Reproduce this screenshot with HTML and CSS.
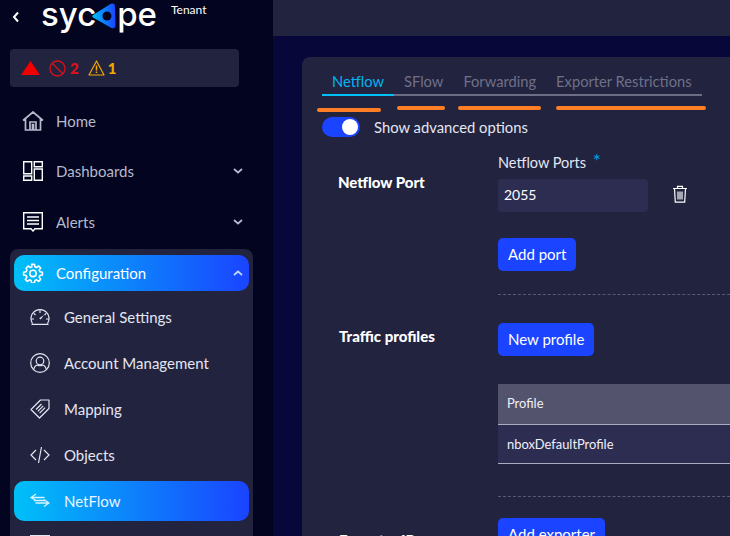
FILE: index.html
```html
<!DOCTYPE html>
<html lang="en">
<head>
<meta charset="utf-8">
<title>Sycope NetFlow configuration</title>
<link rel="stylesheet" href="styles.css">
</head>
<body>
<div class="app">
  <aside class="sidebar">
    <header class="brand">
      <svg class="back" width="8" height="12" viewBox="0 0 8 12"><path d="M6 1.500 2 6l4 4.500" fill="none" stroke="#fff" stroke-width="2"/></svg>
      <div class="logo">
        <span>syc</span>
        <svg class="logo-o" width="24" height="26" viewBox="0 0 24 26">
          <defs><linearGradient id="lg" x1="0" y1="0" x2="1" y2="0"><stop offset="0" stop-color="#00c0f8"/><stop offset="1" stop-color="#1a44ff"/></linearGradient></defs>
          <path d="M1 12 18.500 1q4-1.500 4.500 2l.5 20q-.5 3-4 2L1 14.500q-1.500-1.200 0-2.500Z" fill="url(#lg)"/>
          <circle cx="15" cy="13" r="4.500" fill="#03041f"/>
        </svg>
        <span>pe</span>
      </div>
      <span class="tenant">Tenant</span>
    </header>
    <div class="alerts-box">
      <svg width="19" height="14" viewBox="0 0 19 14"><path d="M9.500 0 19 14H0Z" fill="#f00000"/></svg>
      <svg class="ban" width="17" height="17" viewBox="0 0 17 17"><circle cx="8.500" cy="8.500" r="7.500" fill="none" stroke="#d8101c" stroke-width="1.300"/><path d="M3.200 3.200 13.800 13.800" stroke="#d8101c" stroke-width="1.300"/></svg>
      <b class="count red">2</b>
      <svg class="warn" width="17" height="16" viewBox="0 0 17 16"><path d="M8.500 1 16 15H1Z" fill="none" stroke="#f2a900" stroke-width="1.200" stroke-linejoin="round"/><path d="M8.500 5.500v5M8.500 11.500v1.500" stroke="#f2a900" stroke-width="1.500"/></svg>
      <b class="count amber">1</b>
    </div>
    <nav class="nav">
      <a class="item">
        <svg class="ico" width="22" height="20" viewBox="0 0 22 20"><path d="M1 9.500 11 1l10 8.500M3.500 8v11h15V8M8 19v-8h6v8M10.500 19v-5.500h1V19" fill="none" stroke="#b7b9cc" stroke-width="1.700"/></svg>
        <span>Home</span>
      </a>
      <a class="item">
        <svg class="ico" width="20" height="20" viewBox="0 0 20 20"><path d="M.7.700h8v12h-8zM11.300.700h8v5h-8zM11.300 8h8v11.300h-8zM.7 15h8v4.300h-8z" fill="none" stroke="#fff" stroke-width="1.400"/></svg>
        <span>Dashboards</span>
        <svg class="chev" width="10" height="6" viewBox="0 0 10 6"><path d="m1 1 4 3.500L9 1" fill="none" stroke="#b7b9cc" stroke-width="1.700"/></svg>
      </a>
      <a class="item item-alerts">
        <svg class="ico" width="20" height="20" viewBox="0 0 20 20"><path d="M.7.700h18.600v16h-7.300L10 19l-2-2.300H.7zM4 5h12M4 8.500h12M4 12h12" fill="none" stroke="#fff" stroke-width="1.400"/></svg>
        <span>Alerts</span>
        <svg class="chev" width="10" height="6" viewBox="0 0 10 6"><path d="m1 1 4 3.500L9 1" fill="none" stroke="#b7b9cc" stroke-width="1.700"/></svg>
      </a>
      <div class="group">
        <a class="group-head">
          <svg class="ico" width="20" height="20" viewBox="0 0 24 24"><path d="M10.300 1.500h3.400l.6 3.100 1.900.8 2.600-1.800 2.400 2.400-1.800 2.600.8 1.900 3.100.6v3.400l-3.100.6-.8 1.900 1.800 2.600-2.400 2.400-2.600-1.800-1.900.8-.6 3.100h-3.400l-.6-3.100-1.900-.8-2.600 1.800-2.400-2.400 1.800-2.600-.8-1.900-3.100-.6v-3.400l3.100-.6.8-1.900L3.800 6l2.400-2.400 2.600 1.800 1.900-.8Z" fill="none" stroke="#fff" stroke-width="1.900" stroke-linejoin="round"/><circle cx="12" cy="12.500" r="3.800" fill="none" stroke="#fff" stroke-width="1.900"/></svg>
          <span>Configuration</span>
          <svg class="chev" width="10" height="6" viewBox="0 0 10 6"><path d="m1 5 4-3.500L9 5" fill="none" stroke="#c6d4ff" stroke-width="1.700"/></svg>
        </a>
        <a class="sub">
          <svg class="sub-ico" width="20" height="16" viewBox="0 0 20 16"><path d="M2.500 14.500A9 9 0 1 1 17.500 14.500M1.500 15.300h17M10 1.500v2.500M4 4.500 5.500 6M16 4.500 14.500 6M1.500 10H4M18.500 10H16" fill="none" stroke="#e4e6f2" stroke-width="1.200"/><path d="m14 6-3.300 4.500-1.500-1.200Z" fill="#e4e6f2"/></svg>
          <span>General Settings</span>
        </a>
        <a class="sub">
          <svg class="sub-ico" width="20" height="20" viewBox="0 0 20 20"><circle cx="10" cy="10" r="9.300" fill="none" stroke="#e4e6f2" stroke-width="1.200"/><circle cx="10" cy="8" r="3.800" fill="none" stroke="#e4e6f2" stroke-width="1.200"/><path d="M3.800 16.500q.7-4 3.700-4.500 2.500 1.500 5 0 3 .5 3.700 4.500" fill="none" stroke="#e4e6f2" stroke-width="1.200"/></svg>
          <span>Account Management</span>
        </a>
        <a class="sub">
          <svg class="sub-ico" width="20" height="20" viewBox="0 0 20 20"><path d="M1 10.500 10.500 1H19v8.500L9.500 19ZM6 10.500l5.500-5.500M7.800 12.300l5.500-5.500M9.600 14.100l5.500-5.500" fill="none" stroke="#e4e6f2" stroke-width="1.200" stroke-linejoin="round"/></svg>
          <span>Mapping</span>
        </a>
        <a class="sub">
          <svg class="sub-ico" width="20" height="18" viewBox="0 0 20 18"><path d="M6 4 1 9l5 5M14 4l5 5-5 5M11.500 1 8.500 17" fill="none" stroke="#e4e6f2" stroke-width="1.200"/></svg>
          <span>Objects</span>
        </a>
        <a class="sub sub-active">
          <svg class="sub-ico netflow-ico" width="20" height="14" viewBox="0 0 20 14"><path d="M6 1 1 4.500 6 7.500M1 4.500h13.500M14 6.500l5 3.500-5 3.500M19 10H5.500M4 7.500h11" fill="none" stroke="#d8f4ff" stroke-width="1.300"/></svg>
          <span>NetFlow</span>
        </a>
        <a class="sub sub-next"><span class="stub"></span></a>
      </div>
    </nav>
  </aside>
  <div class="content">
    <div class="topbar"></div>
    <main class="main">
      <section class="card">
        <div class="tabs">
          <a class="tab tab-active">Netflow</a>
          <a class="tab">SFlow</a>
          <a class="tab">Forwarding</a>
          <a class="tab">Exporter Restrictions</a>
        </div>
        <div class="toggle-row">
          <span class="toggle"><span class="knob"></span></span>
          <span>Show advanced options</span>
        </div>
        <div class="row row-port">
          <h3 class="row-label label-port">Netflow Port</h3>
          <div class="row-body">
            <label class="field-label">Netflow Ports <span class="req">*</span></label>
            <div class="port-line">
              <div class="input">2055</div>
              <svg class="trash" width="16" height="18" viewBox="0 0 16 18"><path d="M1 3.500h14M5.500 3.500V1.300h5v2.200M2.500 3.500l.8 13.700h9.400l.8-13.700M6 6.500v8M8 6.500v8M10 6.500v8" fill="none" stroke="#fff" stroke-width="1.200"/></svg>
            </div>
            <button class="btn btn-port">Add port</button>
          </div>
        </div>
        <div class="row row-profiles">
          <h3 class="row-label label-profiles">Traffic profiles</h3>
          <div class="row-body body-rule">
            <button class="btn">New profile</button>
            <div class="table">
              <div class="th">Profile</div>
              <div class="td">nboxDefaultProfile</div>
            </div>
          </div>
        </div>
        <div class="row row-exporter">
          <h3 class="row-label label-exporter">Exporter IP</h3>
          <div class="row-body body-rule body-exporter">
            <button class="btn">Add exporter</button>
          </div>
        </div>
      </section>
    </main>
  </div>
</div>
<div class="mark mark-1"></div>
<div class="mark mark-2"></div>
<div class="mark mark-3"></div>
<div class="mark mark-4"></div>
</body>
</html>
```

FILE: styles.css
```css
* { box-sizing: border-box; }
html, body { margin: 0; height: 100%; overflow: hidden; }
body { font-family: Lato, "Open Sans", sans-serif; font-size: 15px; color: #e4e6f2; background: #03041f; position: relative; }
.app { display: flex; height: 536px; overflow: hidden; }
.sidebar { width: 273px; flex: none; background: #03041f; padding-right: 20px; }
.brand { display: flex; height: 36px; padding-left: 12px; align-items: flex-start; }
.back { flex: none; margin-top: 11px; }
.logo { display: flex; align-items: flex-start; margin-left: 21px; font-family: Inter, sans-serif; font-size: 33px; line-height: 28px; font-weight: 500; color: #fff; }
.logo-o { margin: 3px 1px 0 -4px; flex: none; }
.tenant { font-size: 12px; line-height: 14px; color: #fff; margin: 3px 0 0 14px; }
.alerts-box { margin: 13px 0 0 10px; height: 38px; background: #22233f; border-radius: 4px; display: flex; align-items: center; padding-left: 11px; width: 229px; }
.ban { margin-left: 9px; }
.count { font-size: 15px; margin-left: 4px; font-weight: 900; }
.red { color: #e01018; }
.warn { margin-left: 9px; }
.amber { color: #f2a900; margin-left: 3px; }
.nav { display: flex; flex-direction: column; margin-top: 9px; }
.item { display: flex; align-items: center; height: 50px; padding-left: 22px; color: #b7b9cc; position: relative; }
.item-alerts { margin-top: 1px; }
.ico { flex: none; width: 22px; margin-right: 12px; }
.chev { position: absolute; left: 233px; top: 22px; }
.group { margin: 2px 0 0 10px; background: #22233f; border-radius: 8px 8px 0 0; padding: 6px 4px 0; height: 300px; }
.group-head { display: flex; align-items: center; position: relative; height: 36px; margin-bottom: 3px; padding-left: 8px; border-radius: 10px; background: linear-gradient(90deg, #00c0f8, #1a44ff); color: #fff; }
.group-head .chev { left: 219px; top: 15px; }
.sub { display: flex; align-items: center; height: 46px; padding-left: 16px; color: #e4e6f2; }
.sub-ico { width: 20px; flex: none; margin-right: 14px; }
.netflow-ico { margin-top: -3px; }
.sub-active { height: 40px; margin-top: 3px; border-radius: 10px; background: linear-gradient(90deg, #00c0f8, #1a44ff); color: #e8f6ff; }
.sub-next { height: 30px; align-items: flex-start; padding-top: 14px; }
.stub { display: block; width: 20px; height: 20px; background: #e4e6f2; }
.content { flex: 1; min-width: 0; display: flex; flex-direction: column; }
.topbar { height: 36px; flex: none; background: #22233f; }
.main { flex: 1; background: #07073a; padding: 21px 0 0 29px; overflow: hidden; }
.card { background: #22233f; border-radius: 8px 8px 0 0; margin-right: -30px; padding: 0 0 0 20px; height: 520px; }
.tabs { display: flex; width: 380px; height: 39px; padding-top: 15px; border-bottom: 2px solid #6c6c84; font-size: 14.7px; }
.tab { padding: 0 10px; height: 24px; line-height: 19px; color: #6f7088; border-bottom: 2px solid transparent; }
.tab-active { color: #00b4f0; border-bottom-color: #00c0f8; width: 72px; }
.toggle-row { display: flex; align-items: center; gap: 14px; margin-top: 21px; height: 20px; color: #e4e6f2; font-size: 14.8px; }
.toggle-row span:last-child { margin-top: -1px; }
.toggle { width: 38px; height: 20px; background: #1a44ff; border-radius: 10px; display: flex; align-items: center; justify-content: flex-end; padding-right: 2px; }
.knob { width: 16px; height: 16px; background: #fff; border-radius: 50%; }
.row { display: grid; grid-template-columns: 176px 1fr; }
.row-label { margin: 0; font-size: 15px; font-weight: 900; color: #fff; padding-left: 16px; line-height: 20px; }
.row-port { margin-top: 16px; }
.label-port { padding-top: 19px; }
.field-label { display: block; line-height: 20px; color: #e4e6f2; font-size: 14.5px; }
.req { color: #00a0e8; margin-left: 3px; font-size: 19px; line-height: 0; }
.port-line { display: flex; align-items: center; margin-top: 6px; }
.input { width: 150px; height: 33px; background: #2d2d52; border-radius: 4px; line-height: 32px; padding-left: 6px; color: #fff; font-size: 14px; }
.trash { margin: -4px 0 0 24px; }
.btn { display: block; font: inherit; height: 33px; padding: 0 10px 2px; background: #1a44ff; color: #fff; border: 0; border-radius: 5px; }
.btn-port { margin-top: 26px; }
.body-rule { border-top: 1px dashed #5a5a74; padding-top: 28px; height: 202px; }
.body-exporter { padding-top: 21px; }
.row-profiles { margin-top: 23px; }
.label-profiles { padding-top: 32px; padding-left: 17px; }
.table { margin-top: 28px; font-size: 12.9px; }
.th { height: 41px; line-height: 39px; padding-left: 9px; background: #53536d; border-bottom: 1px solid #aaaac0; color: #f0f0fa; }
.td { height: 39px; line-height: 38px; padding-left: 9px; background: #2d2d52; border-bottom: 1px solid #aaaac0; color: #f0f0fa; }
.label-exporter { padding-top: 34px; padding-left: 17px; }
.mark { position: absolute; height: 4px; background: #ff7f27; border-radius: 2px; }
.mark-1 { left: 317px; top: 108px; width: 64px; }
.mark-2 { left: 397px; top: 106px; width: 48px; }
.mark-3 { left: 458px; top: 106px; width: 83px; }
.mark-4 { left: 556px; top: 106px; width: 150px; }
```
